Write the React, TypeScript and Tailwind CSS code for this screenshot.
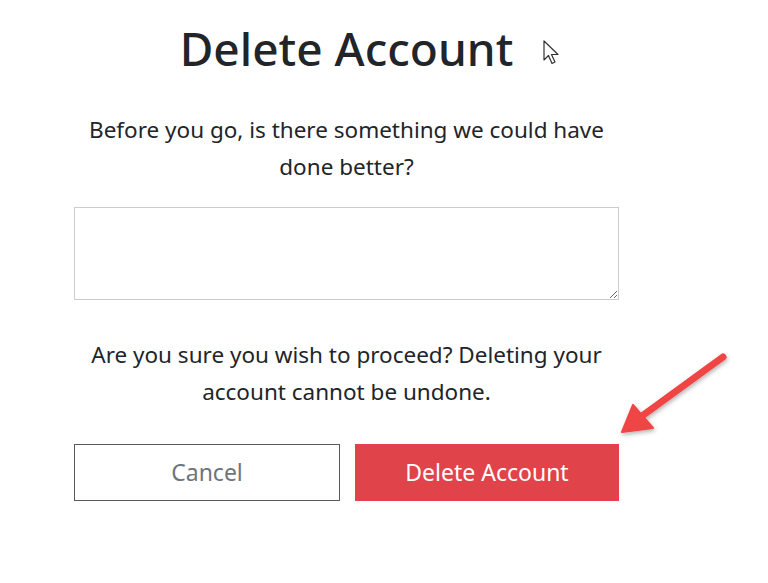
export default function App() {
  return (
    <div
      className="relative h-[583px] w-[768px] overflow-hidden bg-white text-[#212529]"
      style={{ fontFamily: '"Noto Sans", "Open Sans", sans-serif' }}
    >
      <div className="ml-[74px] flex w-[545px] flex-col items-center pt-[18px]">
        <h1 className="text-[46px] font-medium leading-[60px]">Delete Account</h1>
        <p className="mt-[33px] w-[535px] text-center text-[22.5px] leading-[37px]">
          Before you go, is there something we could have done better?
        </p>
        <textarea className="mt-[22px] h-[93px] w-full resize-y border border-[#ccc] p-2 outline-none" />
        <p className="mt-[36px] w-[535px] text-center text-[22.5px] leading-[37px]">
          Are you sure you wish to proceed? Deleting your account cannot be undone.
        </p>
        <div className="mt-[34px] flex w-full gap-[15px]">
          <button className="h-[57px] flex-1 border border-[#5a5a5a] bg-white text-[23px] text-[#6c757d]">
            Cancel
          </button>
          <button className="h-[57px] flex-1 bg-[#e0434a] text-[23px] text-white">
            Delete Account
          </button>
        </div>
      </div>

      {/* mouse cursor */}
      <svg className="absolute left-[543px] top-[40px]" width="18" height="28" viewBox="0 0 18 28">
        <path d="M1 1 L1 20 L5.5 15.5 L9 23.5 L12 22 L8.5 14.5 L15 14.5 Z" fill="white" stroke="#333" strokeWidth="1.2" strokeLinejoin="round" />
      </svg>

      {/* annotation arrow */}
      <svg className="absolute left-0 top-0" width="768" height="583" style={{ pointerEvents: "none" }}>
        <defs>
          <filter id="sh" x="-20%" y="-20%" width="140%" height="140%">
            <feDropShadow dx="1" dy="2" stdDeviation="2" floodColor="#000" floodOpacity="0.3" />
          </filter>
        </defs>
        <g filter="url(#sh)">
          <line x1="723" y1="357" x2="642" y2="416" stroke="#f04444" strokeWidth="7" strokeLinecap="round" />
          <path d="M622 432 L633 405 L653 428 Z" fill="#f04444" stroke="#f04444" strokeWidth="2" strokeLinejoin="round" />
        </g>
      </svg>
    </div>
  );
}
